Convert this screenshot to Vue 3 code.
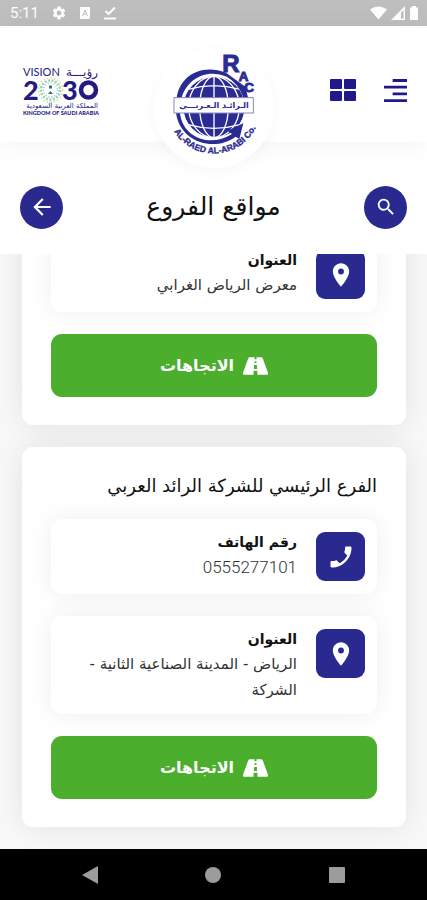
<template>
  <div class="screen" dir="rtl" lang="ar">
    <div class="status-bar" dir="ltr">
      <div class="status-group">
        <span class="clock">5:11</span>
        <svg width="16" height="16" viewBox="0 0 24 24" fill="currentColor"><path :d="icons.gear" /></svg>
        <svg width="12" height="12" viewBox="0 0 12 12">
          <rect x="1" y="0" width="10" height="12" rx="1" fill="currentColor" />
          <path d="M3.6 9 6 3l2.4 6M4.5 7h3" fill="none" stroke="#bfbfbf" />
        </svg>
        <svg width="14" height="14" viewBox="0 0 14 14" fill="none" stroke="currentColor" stroke-width="2">
          <path d="M2.5 5 5.5 8 12 1.500M1 12.500h12" />
        </svg>
      </div>
      <div class="status-icons">
        <svg width="17" height="14" viewBox="0 0 17 14" fill="currentColor"><path d="M0 3.500Q8.500-2.500 17 3.500L8.500 13.500Z" /></svg>
        <svg width="14" height="14" viewBox="0 0 14 14" fill="currentColor"><path d="M0 14 14 0V14ZM10 12.500h2.500V4L10 6.500Z" fill-rule="evenodd" /></svg>
        <svg width="10" height="14" viewBox="0 0 10 14" fill="currentColor"><path d="M3 0h4v1.500h2V14H1V1.500h2Z" /></svg>
      </div>
    </div>

    <header class="header">
      <nav class="menu">
        <button type="button" class="icon-btn" aria-label="القائمة">
          <svg width="23" height="23" viewBox="0 0 24 24" fill="currentColor">
            <path d="M9 0h15v3H9zM0 7h24v3H0zM9 14h15v3H9zM0 21h24v3H0z" />
          </svg>
        </button>
        <button type="button" class="icon-btn" aria-label="الأقسام">
          <svg width="28" height="23" viewBox="0 0 28 23" fill="currentColor">
            <rect x="1" y="0" width="12" height="10" rx="1" />
            <rect x="15" y="0" width="12" height="10" rx="1" />
            <rect x="1" y="12" width="12" height="10" rx="1" />
            <rect x="15" y="12" width="12" height="10" rx="1" />
          </svg>
        </button>
      </nav>

      <a href="#" class="logo" aria-label="الرائد العربي">
        <svg width="120" height="120" viewBox="10 24 360 360" direction="ltr">
          <circle cx="190" cy="201" r="92" fill="#2a2b93" />
          <g fill="none" stroke="#fff" stroke-width="4">
            <path d="M190 108v186M98 201h184M112 148q78-22 156 0M112 254q78 22 156 0" />
            <ellipse cx="190" cy="201" rx="43" ry="92" />
            <ellipse cx="190" cy="201" rx="76" ry="92" />
            <circle cx="190" cy="201" r="94" />
          </g>
          <!-- swoosh round the globe, ending in the arrow head -->
          <path d="M78 176C84 112 148 68 226 98L284 140 293 176H280Q262 128 228 110C168 84 108 116 92 176Z" fill="#2a2b93" />
          <path d="M88 219C96 294 180 324 244 282L230 272 278 250 266 297 255 290C190 338 88 306 76 219Z" fill="#2a2b93" />
          <rect x="70" y="173" width="238" height="46" fill="#fff" stroke="#8586bd" stroke-width="3" />
          <text x="190" y="204" class="logo-arabic" direction="rtl">الـرائـد  الـعـربـــي</text>
          <text x="215" y="97" class="rac" font-size="72">R</text>
          <text x="264" y="124" class="rac" font-size="40">A</text>
          <text x="281" y="156" class="rac" font-size="40">C</text>
          <path id="arc" d="M70 274A141 141 0 0 0 326 236" fill="none" />
          <text class="ring"><textPath href="#arc">AL-RAED AL-ARABI Co.</textPath></text>
        </svg>
      </a>

      <svg class="vision" width="76" height="52" viewBox="0 0 152 104" direction="ltr">
        <text x="0" y="22" font-size="22">VISION</text>
        <text x="150" y="21" font-size="24" class="vision-arabic" direction="rtl">رؤيـــة</text>
        <text x="0" y="69" font-size="54" class="bold">2</text>
        <text x="78" y="69" font-size="54" class="bold">3</text>
        <circle cx="131" cy="50" r="15" fill="none" stroke="#241a83" stroke-width="9" />
        <g fill="none">
          <circle cx="55" cy="50" r="19" stroke="#9ad3b0" stroke-width="5" stroke-dasharray="4 3" />
          <circle cx="55" cy="50" r="14" stroke="#8cc6dd" stroke-width="3" stroke-dasharray="2 4" />
          <circle cx="55" cy="50" r="24" stroke="#d9dc83" stroke-width="3" stroke-dasharray="3 4" />
        </g>
        <path d="M52 41h6v6h-6zM50 58l5-6 5 6z" fill="#2f7568" />
        <text x="150" y="86" font-size="14" class="vision-arabic" direction="rtl">المملكة العربية السعودية</text>
        <text x="0" y="99" font-size="11" class="bold">KINGDOM OF SAUDI ARABIA</text>
      </svg>
    </header>

    <div class="title-bar">
      <button type="button" class="round-btn" aria-label="بحث">
        <svg width="22" height="22" viewBox="0 0 24 24" fill="currentColor"><path :d="icons.search" /></svg>
      </button>
      <h1>مواقع الفروع</h1>
      <button type="button" class="round-btn" aria-label="رجوع">
        <svg width="26" height="26" viewBox="0 0 24 24" fill="currentColor"><path :d="icons.back" /></svg>
      </button>
    </div>

    <main class="branches">
      <section v-for="(branch, i) in branches" :key="i" class="card">
        <h2 v-if="branch.name">{{ branch.name }}</h2>
        <div v-for="row in branch.rows" :key="row.label" class="info">
          <span class="info-icon">
            <svg width="28" height="28" viewBox="0 0 24 24" fill="currentColor" :class="{ flip: row.icon === 'phone' }">
              <path :d="icons[row.icon]" />
            </svg>
          </span>
          <div class="info-text">
            <strong>{{ row.label }}</strong>
            <p :class="{ number: row.icon === 'phone' }">{{ row.value }}</p>
          </div>
        </div>
        <button type="button" class="directions">
          <svg width="25" height="18" viewBox="0 0 26 18" fill="currentColor">
            <path d="M7 0h5v2h2V0h5q1 0 1.500 1L26 16q.5 2-1 2H15v-4h-4v4H1q-1.500 0-1-2L5.500 1Q6 0 7 0ZM12 4v2h2V4ZM11.500 8v4h3V8Z" fill-rule="evenodd" />
          </svg>
          <span>الاتجاهات</span>
        </button>
      </section>
    </main>

    <nav class="system-nav" dir="ltr">
      <button type="button" aria-label="Back"><svg width="18" height="18" viewBox="0 0 18 18"><path d="M1 9 17 0V18Z" /></svg></button>
      <button type="button" aria-label="Home"><svg width="18" height="18" viewBox="0 0 18 18"><circle cx="9" cy="9" r="8" /></svg></button>
      <button type="button" aria-label="Recent"><svg width="18" height="18" viewBox="0 0 18 18"><rect x="1" y="1" width="16" height="16" rx="1" /></svg></button>
    </nav>
  </div>
</template>

<script setup>
const icons = {
  gear: 'M19.140 12.940c.04-.3.06-.61.06-.94 0-.32-.02-.64-.07-.94l2.030-1.580c.18-.14.23-.41.12-.61l-1.920-3.320c-.12-.22-.37-.29-.59-.22l-2.390.96c-.5-.38-1.030-.7-1.620-.94L14.400 2.810c-.04-.24-.24-.41-.48-.41h-3.840c-.24 0-.43.17-.47.41l-.36 2.540c-.59.24-1.130.57-1.620.94l-2.390-.96c-.22-.08-.47 0-.59.22L2.740 8.870c-.12.21-.08.47.12.61l2.030 1.580c-.05.3-.09.63-.09.94s.02.64.07.94l-2.030 1.580c-.18.14-.23.41-.12.61l1.920 3.320c.12.22.37.29.59.22l2.390-.96c.5.38 1.030.7 1.620.94l.36 2.540c.05.24.24.41.48.41h3.840c.24 0 .44-.17.47-.41l.36-2.540c.59-.24 1.130-.56 1.620-.94l2.390.96c.22.08.47 0 .59-.22l1.920-3.320c.12-.22.07-.47-.12-.61l-2.010-1.580zM12 15.600a3.600 3.600 0 1 1 0-7.200 3.600 3.600 0 0 1 0 7.200z',
  search: 'M15.500 14h-.79l-.28-.27A6.500 6.500 0 1 0 13.730 14.430l.27.28v.79l5 4.990L20.490 19zm-6 0a4.500 4.500 0 1 1 0-9 4.500 4.500 0 0 1 0 9z',
  back: 'M20 11H7.830l5.590-5.590L12 4l-8 8 8 8 1.410-1.410L7.830 13H20z',
  pin: 'M12 2C8.130 2 5 5.130 5 9c0 5.250 7 13 7 13s7-7.750 7-13c0-3.870-3.130-7-7-7zm0 9.500a2.500 2.500 0 1 1 0-5 2.500 2.500 0 0 1 0 5z',
  phone: 'M6.620 10.790c1.440 2.830 3.760 5.140 6.590 6.590l2.200-2.200c.27-.27.67-.36 1.020-.24 1.120.37 2.330.57 3.570.57.55 0 1 .45 1 1V20c0 .55-.45 1-1 1-9.390 0-17-7.610-17-17 0-.55.45-1 1-1h3.500c.55 0 1 .45 1 1 0 1.250.2 2.450.57 3.570.11.35.03.74-.25 1.020z',
}

const branches = [
  {
    rows: [
      { icon: 'pin', label: 'العنوان', value: 'معرض الرياض الغرابي' },
    ],
  },
  {
    name: 'الفرع الرئيسي للشركة الرائد العربي',
    rows: [
      { icon: 'phone', label: 'رقم الهاتف', value: '0555277101' },
      { icon: 'pin', label: 'العنوان', value: 'الرياض - المدينة الصناعية الثانية - الشركة' },
    ],
  },
]
</script>

<style>
body {
  margin: 0;
}
</style>

<style scoped>
.screen {
  display: flex;
  flex-direction: column;
  height: 100vh;
  overflow: hidden;
  background: #f8f8f8;
  color: #111;
  font-family: "DejaVu Sans", sans-serif;
}
svg {
  display: block;
  flex: none;
}
button {
  border: 0;
  padding: 0;
  font-family: inherit;
  cursor: pointer;
}

.status-bar {
  display: flex;
  justify-content: space-between;
  align-items: center;
  height: 26px;
  padding: 0 8px 0 10px;
  background: #bfbfbf;
  color: #fff;
  flex: none;
}
.status-group {
  display: flex;
  align-items: center;
  gap: 12px;
}
.status-icons {
  display: flex;
  align-items: center;
  gap: 4px;
}
.clock {
  font: 15px/26px Roboto, sans-serif;
}

.header {
  position: relative;
  z-index: 2;
  display: flex;
  justify-content: space-between;
  align-items: center;
  height: 116px;
  box-sizing: border-box;
  padding: 0 20px 0 23px;
  background: #fff;
  box-shadow: 0 0 30px rgba(0, 0, 0, 0.06);
  flex: none;
}
.menu {
  display: flex;
  gap: 27px;
  padding-top: 12px;
}
.icon-btn {
  background: none;
  color: #20198b;
}
.logo {
  position: absolute;
  top: 22px;
  left: 50%;
  margin-left: -60px;
  border-radius: 50%;
  background: #fff;
  box-shadow: 0 4px 16px rgba(0, 0, 0, 0.03);
}
.logo text {
  fill: #2a2b93;
}
.rac {
  font-family: "Liberation Sans", sans-serif;
  font-weight: 700;
  stroke: #2a2b93;
  stroke-width: 3px;
}
.ring {
  font: 700 26px "Liberation Sans", sans-serif;
  stroke: #2a2b93;
  stroke-width: 1px;
}
.logo-arabic {
  font: 700 24px "DejaVu Sans", sans-serif;
  text-anchor: middle;
}
.vision {
  margin-top: 14px;
  overflow: visible;
}
.vision text {
  fill: #241a83;
  font-family: Lato, sans-serif;
}
.vision .bold {
  font-weight: 900;
}
.vision .vision-arabic {
  font-family: "DejaVu Sans", sans-serif;
}

.title-bar {
  position: relative;
  z-index: 1;
  display: flex;
  justify-content: space-between;
  align-items: center;
  height: 112px;
  box-sizing: border-box;
  padding: 18px 20px 0;
  background: #fff;
  flex: none;
}
.title-bar h1 {
  margin: 0;
  font-size: 25px;
  line-height: 32px;
  font-weight: 400;
}
.round-btn {
  display: grid;
  place-items: center;
  width: 43px;
  height: 43px;
  border-radius: 50%;
  background: #29298f;
  color: #fff;
}

.branches {
  flex: 1;
  min-height: 0;
  display: flex;
  flex-direction: column;
  justify-content: flex-end;
  gap: 22px;
  padding: 0 21px 22px 22px;
  overflow: hidden;
}
.card {
  display: flex;
  flex-direction: column;
  gap: 22px;
  padding: 28px 29px;
  border-radius: 11px;
  background: #fff;
  box-shadow: 0 0 30px rgba(0, 0, 0, 0.09);
}
.card h2 {
  margin: 0;
  font-size: 18px;
  line-height: 22px;
  font-weight: 400;
  white-space: nowrap;
}
.info {
  display: flex;
  align-items: flex-start;
  gap: 19px;
  padding: 11px 12px;
  border-radius: 11px;
  background: #fff;
  box-shadow: 0 0 26px rgba(0, 0, 0, 0.07);
}
.info-icon {
  display: grid;
  place-items: center;
  width: 49px;
  height: 49px;
  margin: 2px 0;
  border-radius: 9px;
  background: #29298f;
  color: #fff;
  flex: none;
}
.flip {
  transform: scaleX(-1);
}
.info-text strong {
  display: block;
  font-size: 14px;
  line-height: 24px;
}
.info-text p {
  margin: 0;
  font-size: 15px;
  line-height: 26px;
  color: #333;
}
.info-text .number {
  font-family: Roboto, sans-serif;
  font-size: 17px;
  font-weight: 300;
}
.directions {
  display: flex;
  justify-content: center;
  align-items: center;
  gap: 9px;
  height: 63px;
  border-radius: 11px;
  background: #4bae2d;
  color: #fff;
  font-size: 16px;
  font-weight: 700;
  line-height: 26px;
}

.system-nav {
  display: flex;
  justify-content: space-around;
  align-items: center;
  height: 51px;
  padding: 0 28px;
  background: #000;
  flex: none;
}
.system-nav button {
  background: none;
}
.system-nav svg {
  fill: #9c9c9c;
}
</style>
